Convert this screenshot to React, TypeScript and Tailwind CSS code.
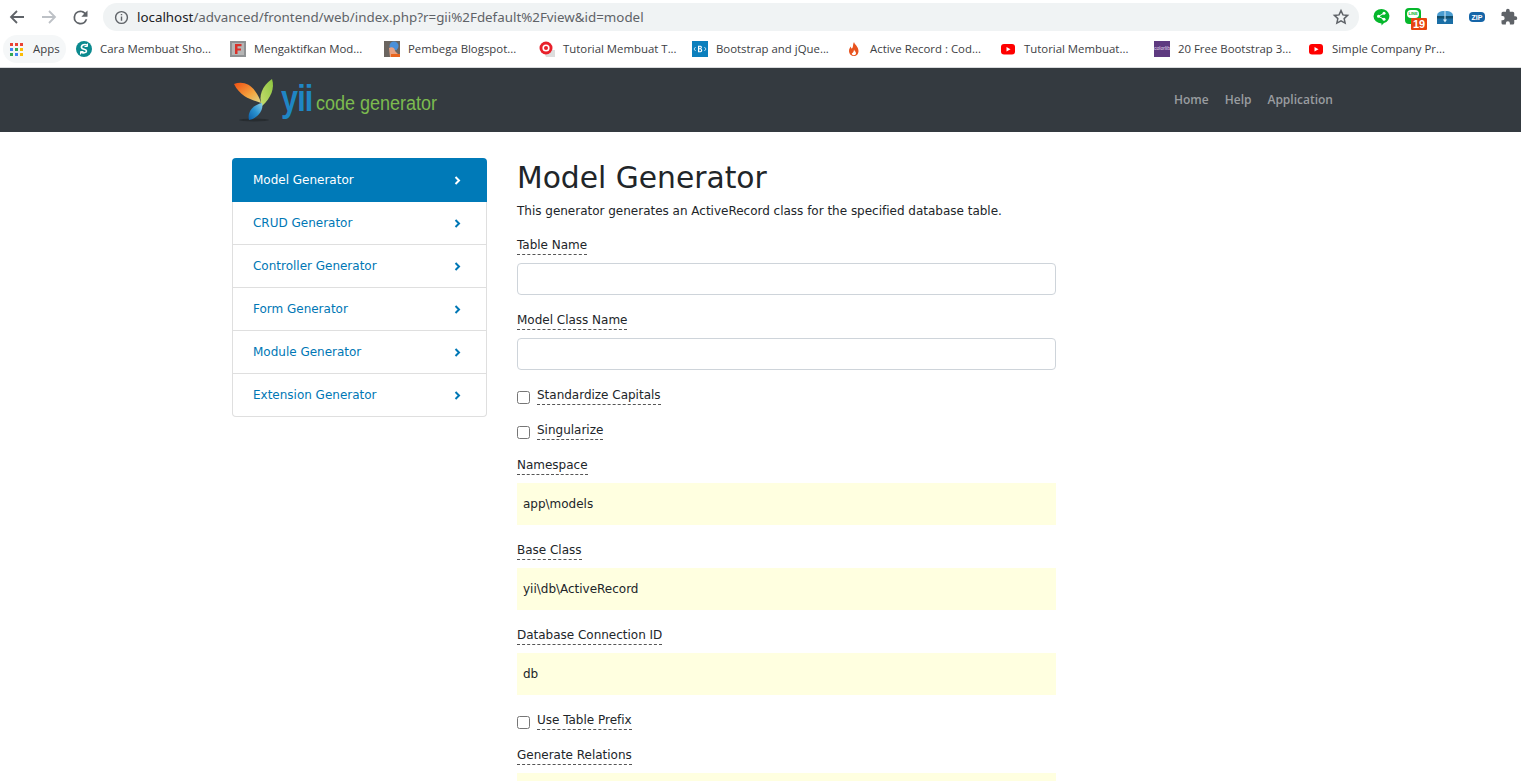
import React from "react";

const ui = "font-['Open_Sans','Noto_Sans',sans-serif]";

function Apps() {
  const c = ["#ea4335", "#ea4335", "#ea4335", "#4285f4", "#34a853", "#fbbc05", "#34a853", "#4285f4", "#fbbc05"];
  return (
    <span className="grid grid-cols-3 gap-[2px] w-[13px] h-[13px]">
      {c.map((x, i) => (
        <span key={i} className="w-[3px] h-[3px]" style={{ background: x }} />
      ))}
    </span>
  );
}

function YT() {
  return (
    <svg width="16" height="16" viewBox="0 0 16 16">
      <rect x="1" y="3" width="14" height="10.5" rx="3" fill="#f00" />
      <path d="M6.5 6l4 2.2-4 2.2z" fill="#fff" />
    </svg>
  );
}

const Fav: Record<string, React.ReactNode> = {
  s: (
    <svg width="16" height="16" viewBox="0 0 16 16">
      <circle cx="8" cy="8" r="8" fill="#0b8a8f" />
      <path d="M11.5 4.5C9 2.5 5 4 5.5 6.5 6 9 10.5 7.5 10.5 10c0 2-3.5 2.5-6 1" fill="none" stroke="#fff" strokeWidth="1.6" />
      <path d="M11.500 2.500v3h-3M4.500 13.500v-3h3" fill="none" stroke="#fff" strokeWidth="1" />
    </svg>
  ),
  f: (
    <svg width="16" height="16" viewBox="0 0 16 16">
      <rect width="16" height="16" fill="#8f9294" />
      <rect x="2" y="2" width="12" height="12" fill="#b5b5b5" />
      <path d="M5 3h6.5v2.2H7.5v2.2h3.5v2.2H7.5V13H5z" fill="#d8302a" />
    </svg>
  ),
  p: (
    <svg width="16" height="16" viewBox="0 0 16 16">
      <rect width="16" height="16" fill="#6b6560" />
      <circle cx="10" cy="5" r="4.5" fill="#4a90d9" />
      <path d="M5 7c3-2 6 0 6 3l3 3v3H6z" fill="#e8a080" />
      <path d="M7 13h9v3H7z" fill="#e8641e" />
    </svg>
  ),
  t: (
    <svg width="16" height="16" viewBox="0 0 16 16">
      <path d="M4 9h12v7H7z" fill="#ddd" />
      <circle cx="7" cy="7" r="6.5" fill="#e8202a" />
      <circle cx="7" cy="7" r="3.6" fill="#fff" />
      <circle cx="7" cy="7" r="2" fill="#e8202a" />
    </svg>
  ),
  b: (
    <svg width="16" height="16" viewBox="0 0 16 16">
      <rect width="16" height="16" fill="#0b7fbd" />
      <path d="M3.6 6 2 8l1.6 2M12.4 6 14 8l-1.6 2" fill="none" stroke="#cfe8f5" strokeWidth=".9" />
      <path d="M6 4.8h2.6c1.6 0 1.8 2.4.4 2.9 1.8.4 1.6 3.5-.5 3.5H6z" fill="#fff" />
      <path d="M7.2 5.8v1.5h1c.8 0 .8-1.5 0-1.5zM7.2 8.2v2h1.100c1 0 1-2 0-2z" fill="#0b7fbd" />
    </svg>
  ),
  a: (
    <svg width="16" height="16" viewBox="0 0 16 16">
      <path d="M8 1c.6 2.600 4.500 4.600 4.500 9 0 3-2 5-4.500 5s-5-2-5-5c0-2 1-3.500 1.800-4.500 0 1.500.6 2 1.200 2C7.500 6 6.500 3.500 8 1z" fill="#e8531e" />
      <path d="M8 8.500c.4 1.500 2 2 2 3.800 0 1.200-1 2-2.200 2s-2-1-2-2c.800 0 2.200-1.500 2.200-3.800z" fill="#fff" />
    </svg>
  ),
  c: (
    <span className="w-4 h-4 bg-[#5e3a80] flex items-center justify-center text-[5px] leading-none text-[#e6dcef] font-['Liberation_Sans',sans-serif]">
      colorlib
    </span>
  ),
};

const bookmarks: [string, React.ReactNode, string][] = [
  ["Cara Membuat Sho...", Fav.s, "w-[154px]"],
  ["Mengaktifkan Mod...", Fav.f, "w-[154px]"],
  ["Pembega Blogspot...", Fav.p, "w-[155px]"],
  ["Tutorial Membuat T...", Fav.t, "w-[153px]"],
  ["Bootstrap and jQue...", Fav.b, "w-[154px]"],
  ["Active Record : Cod...", Fav.a, "w-[154px]"],
  ["Tutorial Membuat...", <YT />, "w-[154px]"],
  ["20 Free Bootstrap 3...", Fav.c, "w-[154px]"],
  ["Simple Company Pr...", <YT />, "w-[154px]"],
];

function Chrome() {
  return (
    <div className={`${ui} bg-white h-[68px] border-b border-[#d8dadc] shrink-0`}>
      <div className="h-[34px] flex items-center">
        <div className="w-[103px] flex items-center pl-[8px] text-[#5f6368]">
          <svg width="18" height="18" viewBox="0 0 18 18" fill="none" stroke="#5f6368" strokeWidth="1.8">
            <path d="M16 9H3M9 3 3 9l6 6" />
          </svg>
          <svg className="ml-[14px]" width="18" height="18" viewBox="0 0 18 18" fill="none" stroke="#bdc1c6" strokeWidth="1.8">
            <path d="M2 9h13M9 3l6 6-6 6" />
          </svg>
          <svg className="ml-[12px]" width="21" height="21" viewBox="0 0 24 24" fill="#5f6368">
            <path d="M17.650 6.350A7.960 7.960 0 0 0 12 4a8 8 0 1 0 7.730 10h-2.080A6 6 0 1 1 12 6c1.660 0 3.140.69 4.220 1.780L13 11h7V4z" />
          </svg>
        </div>
        <div className="w-[1256px] h-[28px] rounded-full bg-[#f0f3f4] flex items-center pl-[11px] pr-[9px]">
          <svg width="15" height="15" viewBox="0 0 16 16" fill="none" stroke="#5f6368" strokeWidth="1.500">
            <circle cx="8" cy="8" r="6.300" />
            <path d="M8 7v4.500M8 4.200v1.500" />
          </svg>
          <span className="ml-[8px] text-[13.350px] leading-[18px] text-[#5f6368] flex-1 font-['Noto_Sans',sans-serif]">
            <span className="text-[#202124]">localhost</span>/advanced/frontend/web/index.php?r=gii%2Fdefault%2Fview&amp;id=model
          </span>
          <svg width="18" height="18" viewBox="0 0 24 24" fill="none" stroke="#5f6368" strokeWidth="2">
            <path d="M12 3.500l2.600 5.700 6.200.7-4.600 4.200 1.300 6.100L12 17.100l-5.500 3.100 1.300-6.100-4.600-4.200 6.200-.7z" />
          </svg>
        </div>
        <div className="flex items-center ml-[14px] relative">
          <svg width="17" height="18" viewBox="0 0 17 18">
            <path d="M8.500 1a8 7.200 0 0 1 2.500 14l-2.500 2.500V15.400A8 7.200 0 0 1 8.500 1z" fill="#06b72c" />
            <circle cx="5.500" cy="8.300" r="1.500" fill="#fff" />
            <circle cx="11" cy="5.300" r="1.500" fill="#fff" />
            <circle cx="11" cy="11.300" r="1.500" fill="#fff" />
            <path d="M5.500 8.300l5.500-3M5.500 8.300l5.500 3" stroke="#fff" />
          </svg>
          <span className="ml-[15px] mt-[-2px] w-[16px] h-[16px] rounded-[4px] bg-[#06b72c] flex items-start justify-center pt-[2px]">
            <span className="w-[12px] h-[8px] rounded-full bg-white flex items-center justify-center text-[4px] leading-none font-bold text-[#06b72c] font-['Liberation_Sans',sans-serif]">
              LINE
            </span>
          </span>
          <span className="absolute left-[38px] top-[10px] w-[16px] h-[12px] rounded-[1px] bg-[#e8430f] text-white text-[11px] leading-[12px] font-bold text-center font-['Liberation_Sans',sans-serif]">
            19
          </span>
          <svg className="ml-[16px]" width="16" height="16" viewBox="0 0 16 16">
            <path d="M0 7c0-3 2-5 8-5s8 2 8 5z" fill="#4a9cd0" />
            <path d="M0 7h16v8H0z" fill="#1a6ea6" />
            <path d="M0 7h16v2.500H0z" fill="#12506f" />
            <path d="M7.500 1.500h1v10h-1z" fill="#d8ecf7" />
            <path d="M6 10.500h4L8 13.500z" fill="#d8ecf7" />
          </svg>
          <span className="ml-[16px] w-[16px] h-[10px] rounded-[4px] bg-[#1565a8] flex items-center justify-center text-[7px] leading-none font-bold text-white font-['Liberation_Sans',sans-serif]">
            ZIP
          </span>
          <svg className="ml-[15px]" width="18" height="18" viewBox="0 0 24 24" fill="#5f6368">
            <path d="M20.500 11H19V7a2 2 0 0 0-2-2h-4V3.500a2.500 2.500 0 0 0-5 0V5H4a2 2 0 0 0-2 2v3.800h1.500a2.700 2.700 0 0 1 0 5.400H2V20a2 2 0 0 0 2 2h3.800v-1.500a2.700 2.700 0 0 1 5.400 0V22H17a2 2 0 0 0 2-2v-4h1.500a2.500 2.500 0 0 0 0-5z" />
          </svg>
        </div>
      </div>
      <div className="h-[28px] mt-[1px] flex items-center text-[11.400px] text-[#3c4043]">
        <div className="ml-[3px] w-[63px] h-[28px] rounded-full bg-[#f5f7f8] flex items-center pl-[7px]">
          <Apps />
          <span className="ml-[10px] mt-[-1px]">Apps</span>
        </div>
        <div className="flex ml-[10px]">
          {bookmarks.map(([t, ic, w]) => (
            <div key={t} className={`${w} flex items-center gap-[8px] whitespace-nowrap shrink-0`}>
              <span className="w-4 h-4 shrink-0 flex">{ic}</span>
              <span className="mt-[-1px]">{t}</span>
            </div>
          ))}
        </div>
      </div>
    </div>
  );
}

function Logo() {
  return (
    <div className="flex items-end h-[44px]">
      <svg width="48" height="44" viewBox="0 0 48 44" className="shrink-0">
        <defs>
          <linearGradient id="o" x1="0" y1="0" x2="1" y2="1">
            <stop offset="0" stopColor="#f04e12" />
            <stop offset=".6" stopColor="#f4a640" />
            <stop offset="1" stopColor="#d8d890" />
          </linearGradient>
          <linearGradient id="g" x1="1" y1="0" x2="0" y2="1">
            <stop offset="0" stopColor="#8cc63f" />
            <stop offset="1" stopColor="#c8dc70" />
          </linearGradient>
          <linearGradient id="b" x1="1" y1="0" x2="0" y2="1">
            <stop offset="0" stopColor="#8ed0e8" />
            <stop offset=".5" stopColor="#2a92d0" />
            <stop offset="1" stopColor="#0b5ea8" />
          </linearGradient>
        </defs>
        <ellipse cx="21" cy="42" rx="15" ry="1.500" fill="#272c30" />
        <path d="M1 6C8 3 17 5 22 13c3 4 5 8 6 12C20 22 8 20 1 6z" fill="url(#o)" />
        <path d="M39 1c3 9-1 19-10 27C25 18 29 8 39 1z" fill="url(#g)" />
        <path d="M29 25c2 7-4 15-13 17-2-8 4-15 13-17z" fill="url(#b)" />
      </svg>
      <span className="mb-[5px] w-[35px] shrink-0 text-[36px] leading-[36px] font-bold tracking-[-1px] text-[#1f86c4] font-['Liberation_Sans',sans-serif] scale-x-[0.85] origin-left">
        yii
      </span>
      <span className="mb-[7px] text-[20px] leading-[24px] text-[#7cbb4f] font-['Liberation_Sans',sans-serif] scale-x-[0.9] origin-left whitespace-nowrap">
        code generator
      </span>
    </div>
  );
}

const side = ["CRUD Generator", "Controller Generator", "Form Generator", "Module Generator", "Extension Generator"];

function Chev({ white }: { white?: boolean }) {
  return (
    <svg width="7" height="9" viewBox="0 0 7 9" fill="none" stroke={white ? "#fff" : "#0077b5"} strokeWidth="2">
      <path d="M1.500 1 5 4.500 1.500 8" />
    </svg>
  );
}

function Lab({ t }: { t: string }) {
  return <span className="inline-block h-[20px] leading-[20px] border-b border-dashed border-[#555] text-[#212529]">{t}</span>;
}

function Field({ t, v, y }: { t: string; v?: string; y?: boolean }) {
  return (
    <div className="mb-[15px]">
      <div className="h-[20px] mb-[8px] flex"><Lab t={t} /></div>
      {y ? (
        <div className="h-[42px] bg-[#ffffe0] pl-[6px] flex items-center text-[#212529]">{v}</div>
      ) : (
        <div className="h-[32px] bg-white border border-[#ced4da] rounded-[4px]" />
      )}
    </div>
  );
}

function Check({ t }: { t: string }) {
  return (
    <div className="mb-[15px] h-[20px] flex items-start">
      <span className="w-[13px] h-[13px] mt-[6px] border border-[#767676] rounded-[2.500px] bg-white shrink-0" />
      <span className="ml-[7px] flex"><Lab t={t} /></span>
    </div>
  );
}

export default function App() {
  return (
    <div className="h-[781px] overflow-hidden bg-white flex flex-col">
      <Chrome />
      <header className="h-[64px] bg-[#343a40] shrink-0 flex items-center justify-between pl-[233px] pr-[188px]">
        <Logo />
        <nav className="flex gap-[16px] text-[12px] font-semibold text-[#9a9da0] font-['Open_Sans',sans-serif]">
          <span>Home</span>
          <span>Help</span>
          <span>Application</span>
        </nav>
      </header>
      <main className="flex pl-[232px] pt-[26px] font-['DejaVu_Sans',sans-serif] text-[12px] tracking-[-0.01px]">
        <aside className="w-[255px] shrink-0">
          <div className="h-[44px] rounded-t-[4px] bg-[#007ab8] text-white flex items-center justify-between pl-[21px] pr-[26px]">
            <span>Model Generator</span>
            <Chev white />
          </div>
          <div className="border border-t-0 border-[#dfdfdf] rounded-b-[4px]">
            {side.map((s, i) => (
              <div key={s} className={`flex items-center justify-between pl-[20px] pr-[25px] text-[#0077b5] ${i < side.length - 1 ? "h-[43px] border-b border-[#dfdfdf]" : "h-[42px]"}`}>
                <span>{s}</span>
                <Chev />
              </div>
            ))}
          </div>
        </aside>
        <section className="w-[539px] ml-[30px]">
          <h1 className="text-[29.750px] leading-[36px] mb-[8px] mt-[2px] text-[#212529]">Model Generator</h1>
          <p className="h-[18px] leading-[18px] text-[#212529] mb-[15px] mt-[-2px]">This generator generates an ActiveRecord class for the specified database table.</p>
          <Field t="Table Name" />
          <Field t="Model Class Name" />
          <Check t="Standardize Capitals" />
          <Check t="Singularize" />
          <Field t="Namespace" v="app\models" y />
          <Field t="Base Class" v="yii\db\ActiveRecord" y />
          <Field t="Database Connection ID" v="db" y />
          <Check t="Use Table Prefix" />
          <Field t="Generate Relations" y />
        </section>
      </main>
    </div>
  );
}
